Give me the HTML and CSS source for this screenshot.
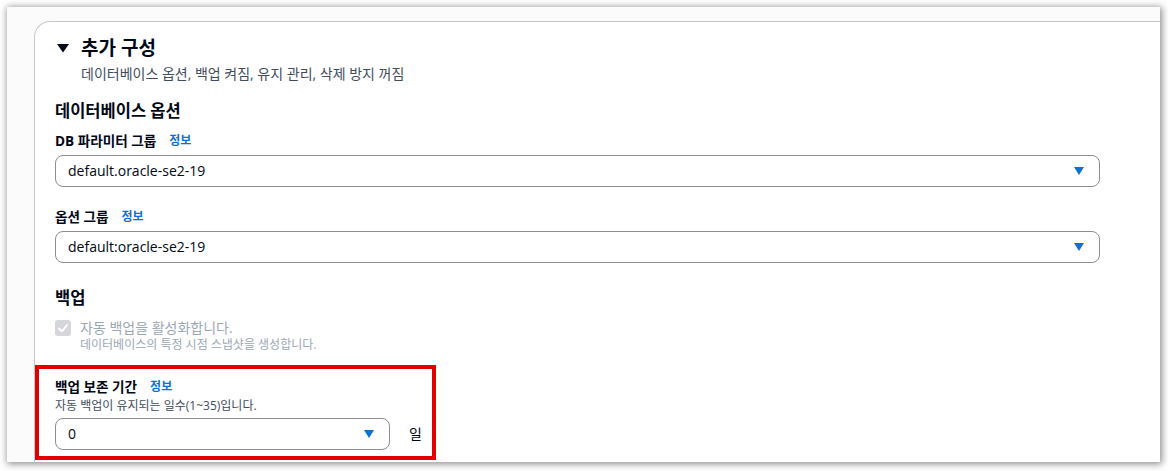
FILE: index.html
```html
<!DOCTYPE html>
<html lang="ko">
<head>
<meta charset="utf-8">
<link rel="stylesheet" href="styles.css">
</head>
<body>
<div class="window">
  <div class="card">
    <div class="exp-header">
      <svg class="exp-caret" width="12" height="9" viewBox="0 0 12 9"><polygon points="0,0 12,0 6,8.5" fill="#000716"/></svg>
      <div class="exp-title">추가 구성</div>
    </div>
    <div class="exp-sub">데이터베이스 옵션, 백업 켜짐, 유지 관리, 삭제 방지 꺼짐</div>

    <div class="sec-h first">데이터베이스 옵션</div>
    <div class="label">DB 파라미터 그룹<span class="info">정보</span></div>
    <div class="select wide"><span class="val">default.oracle-se2-19</span><svg class="caret" width="10" height="8" viewBox="0 0 10 8"><polygon points="0,0 10,0 5,8" fill="#0972d3"/></svg></div>

    <div class="label gap">옵션 그룹<span class="info">정보</span></div>
    <div class="select wide"><span class="val">default:oracle-se2-19</span><svg class="caret" width="10" height="8" viewBox="0 0 10 8"><polygon points="0,0 10,0 5,8" fill="#0972d3"/></svg></div>

    <div class="sec-h backup">백업</div>
    <div class="check-row">
      <span class="checkbox"><svg width="16" height="16" viewBox="0 0 16 16"><polyline points="4,8.5 7,11.3 12,5" fill="none" stroke="#fff" stroke-width="2" stroke-linecap="round" stroke-linejoin="round"/></svg></span>
      <span class="check-text">자동 백업을 활성화합니다.</span>
    </div>
    <div class="check-desc">데이터베이스의 특정 시점 스냅샷을 생성합니다.</div>

    <div class="label retention">백업 보존 기간<span class="info">정보</span></div>
    <div class="field-desc">자동 백업이 유지되는 일수(1~35)입니다.</div>
    <div class="select-row">
      <div class="select narrow"><span class="val">0</span><svg class="caret" width="10" height="8" viewBox="0 0 10 8"><polygon points="0,0 10,0 5,8" fill="#0972d3"/></svg></div>
      <span class="unit">일</span>
    </div>
  </div>
  <div class="highlight"></div>
</div>
</body>
</html>
```

FILE: styles.css
```css
html, body {
  margin: 0;
  padding: 0;
  background: #ffffff;
  overflow: hidden;
}
body {
  width: 1168px;
  height: 471px;
  font-family: "Open Sans", "Noto Sans CJK KR", sans-serif;
  color: #000716;
}
.window {
  position: relative;
  margin: 7px 0 0 7px;
  width: 1153px;
  height: 455px;
  background: #fbfbfb;
  box-shadow: 1px 1px 7px 1px rgba(0, 0, 0, 0.45);
  overflow: hidden;
  padding: 14px 0 0 27px;
  box-sizing: border-box;
}
.card {
  background: #ffffff;
  border-top: 1px solid #c6c6cd;
  border-left: 1px solid #c6c6cd;
  border-top-left-radius: 16px;
  padding: 14px 0 0 20px;
  height: 460px;
  box-sizing: border-box;
}
.exp-header {
  display: flex;
  align-items: center;
  height: 24px;
}
.exp-caret {
  margin-left: 2px;
  margin-right: 12px;
}
.exp-title {
  font-size: 19px;
  font-weight: 700;
  line-height: 24px;
}
.exp-sub {
  margin-top: 5px;
  margin-left: 26px;
  font-size: 14px;
  line-height: 18px;
  color: #414d5c;
}
.sec-h {
  font-size: 16.5px;
  font-weight: 700;
  line-height: 22px;
}
.sec-h.first {
  margin-top: 17px;
}
.sec-h.backup {
  margin-top: 24px;
}
.label {
  margin-top: 9px;
  font-size: 13.6px;
  font-weight: 700;
  line-height: 20px;
  display: flex;
  align-items: center;
}
.label.gap {
  margin-top: 20px;
}
.label.retention {
  margin-top: 24px;
}
.info {
  margin-left: 13px;
  font-size: 12px;
  font-weight: 700;
  color: #0972d3;
}
.select {
  margin-top: 4px;
  height: 32px;
  box-sizing: border-box;
  border: 1px solid #8c8c94;
  border-radius: 8px;
  display: flex;
  align-items: center;
  justify-content: space-between;
  padding: 0 15px 0 12px;
  background: #ffffff;
}
.select.wide {
  width: 1045px;
}
.select.narrow {
  width: 335px;
}
.val {
  font-size: 14px;
  line-height: 20px;
  color: #000716;
}
.caret {
  display: block;
}
.check-row {
  margin-top: 10px;
  display: flex;
  align-items: center;
  height: 18px;
}
.checkbox {
  width: 16px;
  height: 16px;
  border-radius: 3px;
  background: #d5d6da;
  display: block;
}
.checkbox svg {
  display: block;
}
.check-text {
  margin-left: 9px;
  font-size: 14px;
  line-height: 18px;
  color: #9ba7b6;
}
.check-desc {
  margin-left: 25px;
  font-size: 12px;
  line-height: 16px;
  color: #9ba7b6;
}
.field-desc {
  margin-top: 1px;
  font-size: 12px;
  line-height: 16px;
  color: #414d5c;
}
.select-row {
  display: flex;
  align-items: center;
}
.select-row .select {
  margin-top: 4px;
}
.unit {
  margin-left: 19px;
  margin-top: 3px;
  font-size: 14px;
  line-height: 20px;
  color: #000716;
}
.highlight {
  position: absolute;
  left: 28px;
  top: 358px;
  width: 401px;
  height: 95px;
  border: 4px solid #e00000;
  box-sizing: border-box;
}
```
